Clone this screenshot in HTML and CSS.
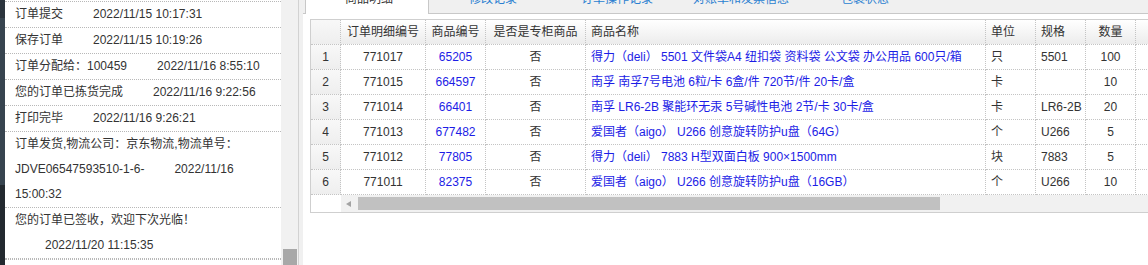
FILE: index.html
```html
<!DOCTYPE html>
<html lang="zh-CN">
<head>
    <meta charset="UTF-8">
    <title>订单详情</title>
    <link rel="stylesheet" href="styles.css">
</head>
<body>
    <div class="page">
        <div class="side-edge"></div>

        <div class="log-panel">
            <ul class="log-list">
                <li>订单提交<span class="log-time">2022/11/15 10:17:31</span></li>
                <li>保存订单<span class="log-time">2022/11/15 10:19:26</span></li>
                <li>订单分配给：100459<span class="log-time">2022/11/16 8:55:10</span></li>
                <li>您的订单已拣货完成<span class="log-time">2022/11/16 9:22:56</span></li>
                <li>打印完毕<span class="log-time">2022/11/16 9:26:21</span></li>
                <li>订单发货,物流公司：京东物流,物流单号：JDVE06547593510-1-6-<span class="log-time">2022/11/16 15:00:32</span></li>
                <li>您的订单已签收，欢迎下次光临！<span class="log-time">2022/11/20 11:15:35</span></li>
            </ul>
        </div>
        <div class="log-scroll"><div class="log-thumb"></div></div>

        <div class="main">
            <div class="tabs">
                <div class="tab active">商品明细</div>
                <div class="tab">修改记录</div>
                <div class="tab">订单操作记录</div>
                <div class="tab">对账单和发票信息</div>
                <div class="tab">包裹状态</div>
            </div>

            <div class="grid-wrap">
                <div class="grid">
                    <div class="cell head num"></div>
                    <div class="cell head center">订单明细编号</div>
                    <div class="cell head center">商品编号</div>
                    <div class="cell head center">是否是专柜商品</div>
                    <div class="cell head">商品名称</div>
                    <div class="cell head">单位</div>
                    <div class="cell head">规格</div>
                    <div class="cell head center">数量</div>
                    <div class="cell head"></div>

                    <div class="cell num">1</div>
                    <div class="cell center">771017</div>
                    <div class="cell center link">65205</div>
                    <div class="cell center">否</div>
                    <div class="cell link">得力（deli） 5501 文件袋A4 纽扣袋 资料袋 公文袋 办公用品 600只/箱</div>
                    <div class="cell">只</div>
                    <div class="cell">5501</div>
                    <div class="cell center">100</div>
                    <div class="cell"></div>

                    <div class="cell num">2</div>
                    <div class="cell center">771015</div>
                    <div class="cell center link">664597</div>
                    <div class="cell center">否</div>
                    <div class="cell link">南孚 南孚7号电池 6粒/卡 6盒/件 720节/件 20卡/盒</div>
                    <div class="cell">卡</div>
                    <div class="cell"></div>
                    <div class="cell center">10</div>
                    <div class="cell"></div>

                    <div class="cell num">3</div>
                    <div class="cell center">771014</div>
                    <div class="cell center link">66401</div>
                    <div class="cell center">否</div>
                    <div class="cell link">南孚 LR6-2B 聚能环无汞 5号碱性电池 2节/卡 30卡/盒</div>
                    <div class="cell">卡</div>
                    <div class="cell">LR6-2B</div>
                    <div class="cell center">20</div>
                    <div class="cell"></div>

                    <div class="cell num">4</div>
                    <div class="cell center">771013</div>
                    <div class="cell center link">677482</div>
                    <div class="cell center">否</div>
                    <div class="cell link">爱国者（aigo） U266 创意旋转防护u盘（64G）</div>
                    <div class="cell">个</div>
                    <div class="cell">U266</div>
                    <div class="cell center">5</div>
                    <div class="cell"></div>

                    <div class="cell num">5</div>
                    <div class="cell center">771012</div>
                    <div class="cell center link">77805</div>
                    <div class="cell center">否</div>
                    <div class="cell link">得力（deli） 7883 H型双面白板 900×1500mm</div>
                    <div class="cell">块</div>
                    <div class="cell">7883</div>
                    <div class="cell center">5</div>
                    <div class="cell"></div>

                    <div class="cell num">6</div>
                    <div class="cell center">771011</div>
                    <div class="cell center link">82375</div>
                    <div class="cell center">否</div>
                    <div class="cell link">爱国者（aigo） U266 创意旋转防护u盘（16GB）</div>
                    <div class="cell">个</div>
                    <div class="cell">U266</div>
                    <div class="cell center">10</div>
                    <div class="cell"></div>
                </div>

                <div class="hscroll">
                    <div class="hscroll-gap"></div>
                    <div class="hscroll-track">
                        <div class="hscroll-arrow"></div>
                        <div class="hscroll-thumb"></div>
                    </div>
                </div>
            </div>
        </div>
    </div>
</body>
</html>
```

FILE: styles.css
```css
body {
    margin: 0;
    width: 1148px;
    height: 265px;
    overflow: hidden;
    font-family: "Liberation Sans", "Noto Sans CJK SC", sans-serif;
    font-size: 12px;
    color: #333;
    background: #fff;
}
.page {
    display: flex;
    height: 265px;
}

/* left dark edge */
.side-edge {
    width: 5px;
    flex-shrink: 0;
    background: linear-gradient(#2b343d 0, #2b343d 18px, #37444f 18px, #37444f 185px, #22292f 185px);
}

/* order log */
.log-panel {
    width: 276px;
    flex-shrink: 0;
    background: #fff;
    overflow: hidden;
}
.log-list {
    list-style: none;
    margin: 1px 0 0;
    padding: 0;
    border-bottom: 1px dotted #b8b8b8;
}
.log-list li {
    border-top: 1px dotted #b8b8b8;
    padding: 0 10px;
    line-height: 25px;
}
.log-list li:last-child {
    border-bottom: 1px dotted #b8b8b8;
}
.log-time {
    padding-left: 30px;
}
.log-scroll {
    width: 17px;
    flex-shrink: 0;
    background: #f1f1f1;
    border-right: 1px solid #d2d2d2;
    display: flex;
    flex-direction: column;
    justify-content: flex-end;
}
.log-thumb {
    height: 16px;
    margin: 0 1px 0 2px;
    background: #a8a8a8;
}

/* right side */
.main {
    flex: 1;
    min-width: 0;
    border-left: 4px solid #f0f0f0;
    background: #fff;
}
.tabs {
    display: flex;
    height: 28px;
    margin-top: -15px;
    padding-left: 2px;
    background: #f0f0f0;
    border-bottom: 1px solid #c8c8c8;
}
.tab {
    width: 118px;
    padding-left: 4px;
    line-height: 28px;
    text-align: center;
    color: #2a7fd0;
    border-left: 1px solid transparent;
    border-right: 1px solid transparent;
}
.tab.active {
    color: #333;
    background: #fff;
    border-color: #c8c8c8;
    height: 29px;
}

.grid-wrap {
    width: 1000px;
    margin: 5px 0 0 7px;
    border: 1px solid #cfcfcf;
    border-right: none;
}
.grid {
    display: grid;
    grid-template-columns: 30px 85px 60px 100px 400px 50px 50px 50px 175px;
}
.cell {
    box-sizing: border-box;
    height: 25px;
    line-height: 24px;
    padding: 0 5px;
    border-right: 1px dotted #c4c4c4;
    border-bottom: 1px dotted #c4c4c4;
    white-space: nowrap;
    overflow: hidden;
}
.cell.center {
    text-align: center;
}
.cell.head {
    background: linear-gradient(#ffffff, #ececec);
}
.cell.num {
    padding: 0;
    text-align: center;
    background: linear-gradient(#f8f8f8, #eeeeee);
}
.cell.link {
    color: #1c1ce6;
}

.hscroll {
    display: flex;
    height: 17px;
}
.hscroll-gap {
    width: 30px;
    background: #fff;
}
.hscroll-track {
    flex: 1;
    display: flex;
    align-items: center;
    background: #f1f1f1;
}
.hscroll-arrow {
    width: 16px;
    height: 17px;
    display: flex;
    align-items: center;
    justify-content: center;
}
.hscroll-arrow::before {
    content: "";
    border-top: 3.5px solid transparent;
    border-bottom: 3.5px solid transparent;
    border-right: 5px solid #a3a3a3;
    margin-left: -1px;
}
.hscroll-thumb {
    width: 582px;
    height: 13px;
    margin-left: 1px;
    background: #c1c1c1;
}
```
